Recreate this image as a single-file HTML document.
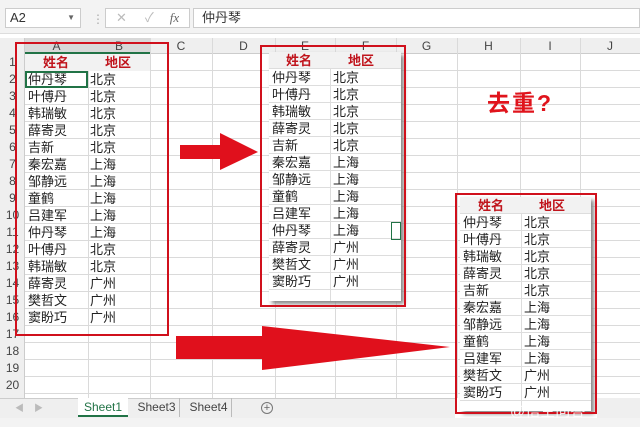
<!DOCTYPE html><html><head><meta charset="utf-8"><style>
*{margin:0;padding:0;box-sizing:border-box}
html,body{width:640px;height:427px;overflow:hidden}
body{position:relative;background:#fff;font-family:"Liberation Sans","Noto Sans CJK SC",sans-serif;font-size:12px;color:#222}
.a{position:absolute}
.grid{left:25px;top:54px;width:615px;height:344px;background:repeating-linear-gradient(to bottom,transparent 0 16px,#dadada 16px 17px)}
.vl{position:absolute;top:38px;height:360px;width:1px;background:#dadada}
.ch{position:absolute;top:38px;height:16px;text-align:center;color:#444;font-size:12px;line-height:16px}
.rh{position:absolute;left:0;width:25px;text-align:center;color:#444;font-size:12px;height:17px;line-height:17px}
.tb{position:absolute;background:#fff;box-shadow:3px 3px 4px #888;overflow:hidden}
.tb .r{height:17px;line-height:17px;border-bottom:1px solid #ddd;position:relative;white-space:nowrap}
.tb span{position:absolute;left:3px}
.hd{background:#f2f2f2;color:#c0141c;font-weight:bold;font-size:13px}
.dv{position:absolute;top:17px;width:1px;background:#ddd}
.red{position:absolute;border:2px solid #d0101c}
</style></head><body>
<div class="a" style="left:0;top:0;width:640px;height:34px;background:#f3f3f3;border-bottom:1px solid #ddd"></div>
<div class="a" style="left:5px;top:8px;width:76px;height:20px;background:#fff;border:1px solid #ccc;font-size:13px;line-height:18px;padding-left:4px;color:#333">A2<span style="position:absolute;right:5px;font-size:8px;color:#666">▼</span></div>
<div class="a" style="left:92px;top:12px;color:#aaa">⋮</div>
<div class="a" style="left:105px;top:8px;width:85px;height:20px;background:#fff;border:1px solid #ccc;color:#bbb;font-size:13px;line-height:18px"><span style="margin-left:10px">✕</span><span style="margin-left:18px">✓</span><span style="margin-left:16px;font-style:italic;font-family:'Liberation Serif';color:#666">fx</span></div>
<div class="a" style="left:193px;top:8px;width:447px;height:20px;background:#fff;border:1px solid #ccc;font-size:13px;line-height:18px;padding-left:8px;color:#333">仲丹琴</div>
<div class="a" style="left:0;top:38px;width:640px;height:16px;background:#efefef;border-bottom:1px solid #ccc"></div>
<div class="a" style="left:0;top:38px;width:25px;height:360px;background:#efefef;border-right:1px solid #ccc"></div>
<div class="a grid"></div>
<div class="vl" style="left:88px"></div><div class="vl" style="left:150px"></div><div class="vl" style="left:212px"></div><div class="vl" style="left:275px"></div><div class="vl" style="left:335px"></div><div class="vl" style="left:396px"></div><div class="vl" style="left:457px"></div><div class="vl" style="left:520px"></div><div class="vl" style="left:580px"></div>
<div class="a" style="left:25px;top:38px;width:125px;height:16px;background:#d8d8d8;border-bottom:2px solid #217346"></div>
<div class="ch" style="left:25px;width:63px">A</div><div class="ch" style="left:88px;width:62px">B</div><div class="ch" style="left:150px;width:62px">C</div><div class="ch" style="left:212px;width:63px">D</div><div class="ch" style="left:275px;width:60px">E</div><div class="ch" style="left:335px;width:61px">F</div><div class="ch" style="left:396px;width:61px">G</div><div class="ch" style="left:457px;width:63px">H</div><div class="ch" style="left:520px;width:60px">I</div><div class="ch" style="left:580px;width:60px">J</div>
<div class="rh" style="top:54px">1</div><div class="rh" style="top:71px">2</div><div class="rh" style="top:88px">3</div><div class="rh" style="top:105px">4</div><div class="rh" style="top:122px">5</div><div class="rh" style="top:139px">6</div><div class="rh" style="top:156px">7</div><div class="rh" style="top:173px">8</div><div class="rh" style="top:190px">9</div><div class="rh" style="top:207px">10</div><div class="rh" style="top:224px">11</div><div class="rh" style="top:241px">12</div><div class="rh" style="top:258px">13</div><div class="rh" style="top:275px">14</div><div class="rh" style="top:292px">15</div><div class="rh" style="top:309px">16</div><div class="rh" style="top:326px">17</div><div class="rh" style="top:343px">18</div><div class="rh" style="top:360px">19</div><div class="rh" style="top:377px">20</div>
<div class="a" style="left:25px;top:54px;width:125px;height:17px;background:#f2f2f2"></div>
<div class="a" style="left:25px;top:54px;font-size:13px;line-height:17px;color:#c0141c;font-weight:bold"><span style="position:absolute;left:18px;white-space:nowrap">姓名</span><span style="position:absolute;left:80px;white-space:nowrap">地区</span></div>
<div class="a" style="left:25px;top:71px;width:63px;height:17px;border:2px solid #217346"></div>
<div class="a" style="left:28px;top:71px;line-height:17px;font-size:13px;white-space:nowrap">仲丹琴<br>叶傅丹<br>韩瑞敏<br>薛寄灵<br>吉新<br>秦宏嘉<br>邹静远<br>童鹤<br>吕建军<br>仲丹琴<br>叶傅丹<br>韩瑞敏<br>薛寄灵<br>樊哲文<br>窦盼巧</div>
<div class="a" style="left:90px;top:71px;line-height:17px;font-size:13px;white-space:nowrap">北京<br>北京<br>北京<br>北京<br>北京<br>上海<br>上海<br>上海<br>上海<br>上海<br>北京<br>北京<br>广州<br>广州<br>广州</div>
<div class="red" style="left:15px;top:42px;width:154px;height:294px"></div>
<div class="tb" style="left:269px;top:52px;width:132px;height:249px;font-size:13px">
<div class="r hd"><span style="left:17px">姓名</span><span style="left:79px">地区</span></div>
<div class="r"><span>仲丹琴</span><span style="left:64px">北京</span></div><div class="r"><span>叶傅丹</span><span style="left:64px">北京</span></div><div class="r"><span>韩瑞敏</span><span style="left:64px">北京</span></div><div class="r"><span>薛寄灵</span><span style="left:64px">北京</span></div><div class="r"><span>吉新</span><span style="left:64px">北京</span></div><div class="r"><span>秦宏嘉</span><span style="left:64px">上海</span></div><div class="r"><span>邹静远</span><span style="left:64px">上海</span></div><div class="r"><span>童鹤</span><span style="left:64px">上海</span></div><div class="r"><span>吕建军</span><span style="left:64px">上海</span></div><div class="r"><span>仲丹琴</span><span style="left:64px">上海</span></div><div class="r"><span>薛寄灵</span><span style="left:64px">广州</span></div><div class="r"><span>樊哲文</span><span style="left:64px">广州</span></div><div class="r"><span>窦盼巧</span><span style="left:64px">广州</span></div>
<div class="dv" style="left:61px;height:232px"></div>
</div>
<div class="a" style="left:391px;top:222px;width:10px;height:18px;border:1px solid #217346"></div>
<div class="red" style="left:260px;top:45px;width:146px;height:262px"></div>
<div class="tb" style="left:460px;top:197px;width:131px;height:214px;font-size:13px">
<div class="r hd"><span style="left:18px">姓名</span><span style="left:79px">地区</span></div>
<div class="r"><span>仲丹琴</span><span style="left:64px">北京</span></div><div class="r"><span>叶傅丹</span><span style="left:64px">北京</span></div><div class="r"><span>韩瑞敏</span><span style="left:64px">北京</span></div><div class="r"><span>薛寄灵</span><span style="left:64px">北京</span></div><div class="r"><span>吉新</span><span style="left:64px">北京</span></div><div class="r"><span>秦宏嘉</span><span style="left:64px">上海</span></div><div class="r"><span>邹静远</span><span style="left:64px">上海</span></div><div class="r"><span>童鹤</span><span style="left:64px">上海</span></div><div class="r"><span>吕建军</span><span style="left:64px">上海</span></div><div class="r"><span>樊哲文</span><span style="left:64px">广州</span></div><div class="r"><span>窦盼巧</span><span style="left:64px">广州</span></div>
<div class="dv" style="left:61px;height:197px"></div>
</div>
<div class="red" style="left:455px;top:193px;width:142px;height:221px"></div>
<div class="a" style="left:487px;top:84px;color:#e0141c;font-size:23px;font-weight:bold;white-space:nowrap;letter-spacing:2px">去重?</div>
<svg class="a" style="left:0;top:0" width="640" height="427"><polygon points="180,145 220,145 220,133 258,152 220,170 220,159 180,159" fill="#e0101c"/><polygon points="176,336 262,336 262,326 450,347 262,370 262,359 176,359" fill="#e0101c"/></svg>
<div class="a" style="left:0;top:398px;width:455px;height:20px;background:#efefef;border-top:1px solid #ccc"></div>
<div class="a" style="left:15px;top:401px;color:#bbb;font-size:9px">◀&nbsp;&nbsp;&nbsp;&nbsp;▶</div>
<div class="a" style="left:78px;top:398px;width:50px;height:19px;background:#fff;border-bottom:2px solid #217346;color:#217346;text-align:center;line-height:18px">Sheet1</div>
<div class="a" style="left:134px;top:398px;width:46px;height:19px;line-height:19px;text-align:center;color:#444;border-right:1px solid #bbb">Sheet3</div>
<div class="a" style="left:186px;top:398px;width:46px;height:19px;line-height:19px;text-align:center;color:#444;border-right:1px solid #bbb">Sheet4</div>
<div class="a" style="left:261px;top:402px;width:12px;height:12px;border:1px solid #777;border-radius:50%;text-align:center;line-height:10px;font-size:11px;color:#666">+</div>
<div class="a" style="left:597px;top:398px;width:43px;height:20px;background:#efefef"></div>
<div class="a" style="left:0;top:418px;width:640px;height:9px;background:#f3f3f3"></div>
<div class="a" style="left:510px;top:400px;color:rgba(255,255,255,.85);font-size:15px;white-space:nowrap">@悟空问答</div>
</body></html>
